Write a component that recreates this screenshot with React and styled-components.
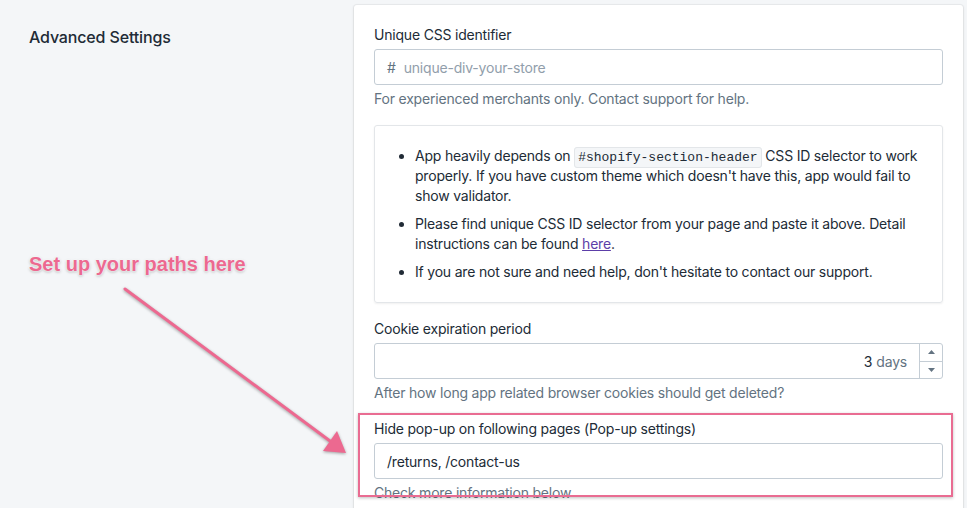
import React from "react";
import styled, { createGlobalStyle } from "styled-components";

const Global = createGlobalStyle`
  html, body {
    margin: 0;
    padding: 0;
    background: #f4f6f8;
  }
  body {
    font-family: Inter, "Noto Sans", sans-serif;
    color: #212b36;
    letter-spacing: -0.2px;
    -webkit-font-smoothing: antialiased;
  }
`;

const Page = styled.div`
  position: relative;
  width: 967px;
  height: 508px;
  overflow: hidden;
  display: grid;
  grid-template-columns: 354px 609px;
  align-items: start;
`;

const Aside = styled.div`
  padding: 27px 0 0 29px;
`;

const Heading = styled.h2`
  margin: 0;
  font-size: 16px;
  font-weight: 500;
  line-height: 20px;
  letter-spacing: -0.15px;
  color: #212b36;
`;

const Card = styled.div`
  margin-top: 5px;
  background: #fff;
  border-radius: 3px;
  box-shadow: 0 0 0 1px rgba(63, 63, 68, 0.05), 0 1px 3px 0 rgba(63, 63, 68, 0.15);
  padding: 20px 20px 40px;
  display: flex;
  flex-direction: column;
  gap: 16px;
`;

const Field = styled.div`
  position: relative;
  display: flex;
  flex-direction: column;
`;

const Label = styled.label`
  font-size: 14px;
  line-height: 20px;
  margin-bottom: 4px;
  color: #212b36;
`;

const InputBox = styled.div`
  height: 36px;
  box-sizing: border-box;
  border: 1px solid #c4cdd5;
  border-radius: 3px;
  display: flex;
  align-items: center;
  padding: 0 0 0 12px;
  font-size: 14px;
  color: #212b36;
  background: #fff;
`;

const Prefix = styled.span`
  color: #637381;
  margin-right: 8px;
`;

const Placeholder = styled.span`
  color: #919eab;
`;

const Help = styled.div`
  font-size: 14px;
  line-height: 20px;
  margin-top: 4px;
  color: #637381;
`;

const Value = styled.span`
  flex: 1;
  text-align: right;
  padding-right: 12px;
`;

const Unit = styled.span`
  color: #637381;
  margin-left: 4px;
`;

const Stepper = styled.div`
  width: 22px;
  height: 34px;
  border-left: 1px solid #c4cdd5;
  display: flex;
  flex-direction: column;
`;

const StepBtn = styled.div`
  flex: 1;
  display: flex;
  align-items: center;
  justify-content: center;
  & + & {
    border-top: 1px solid #c4cdd5;
  }
`;

const Notice = styled.div`
  border: 1px solid #e3e6e9;
  border-radius: 3px;
  box-shadow: 0 1px 2px rgba(63, 63, 68, 0.08);
  padding: 20px 14px 20px 20px;
`;

const List = styled.ul`
  margin: 0;
  padding-left: 20px;
  font-size: 14px;
  line-height: 20px;
  color: #212b36;
  li + li {
    margin-top: 8px;
  }
`;

const Code = styled.code`
  font-family: "Liberation Mono", "DejaVu Sans Mono", monospace;
  font-size: 13px;
  line-height: 14px;
  letter-spacing: 0;
  background: #f4f6f8;
  border: 1px solid #e3e6e9;
  border-radius: 3px;
  padding: 2px 3px;
`;

const Link = styled.a`
  color: #5c3ea8;
  text-decoration: underline;
`;

const Highlight = styled.div`
  position: absolute;
  top: -6px;
  left: -16px;
  right: -10px;
  height: 80px;
  border: 2px solid #e96c92;
  box-shadow: 0 1px 3px rgba(0, 0, 0, 0.25);
  pointer-events: none;
`;

const Callout = styled.div`
  position: absolute;
  left: 29px;
  top: 251px;
  font-family: "Liberation Sans", Arial, sans-serif;
  font-weight: 700;
  font-size: 20px;
  line-height: 26px;
  letter-spacing: 0;
  color: #ec6990;
  text-shadow: 0 0 2px #fff, 0 0 2px #fff, 0 1px 3px rgba(0, 0, 0, 0.35);
`;

const Arrow = styled.svg`
  position: absolute;
  left: 0;
  top: 0;
  pointer-events: none;
  filter: drop-shadow(0 1px 1.5px rgba(0, 0, 0, 0.35));
`;

function Caret({ up }) {
  return (
    <svg width="7" height="4" viewBox="0 0 7 4">
      <path d={up ? "M0 4 L3.5 0 L7 4 Z" : "M0 0 L3.5 4 L7 0 Z"} fill="#637381" />
    </svg>
  );
}

export default function App() {
  return (
    <>
      <Global />
      <Page>
        <Aside>
          <Heading>Advanced Settings</Heading>
        </Aside>
        <Card>
          <Field>
            <Label>Unique CSS identifier</Label>
            <InputBox>
              <Prefix>#</Prefix>
              <Placeholder>unique-div-your-store</Placeholder>
            </InputBox>
            <Help>For experienced merchants only. Contact support for help.</Help>
          </Field>

          <Notice>
            <List>
              <li>
                App heavily depends on <Code>#shopify-section-header</Code> CSS ID selector to work
                properly. If you have custom theme which doesn't have this, app would fail to show
                validator.
              </li>
              <li>
                Please find unique CSS ID selector from your page and paste it above. Detail
                instructions can be found <Link href="#">here</Link>.
              </li>
              <li>If you are not sure and need help, don't hesitate to contact our support.</li>
            </List>
          </Notice>

          <Field>
            <Label>Cookie expiration period</Label>
            <InputBox>
              <Value>
                3<Unit>days</Unit>
              </Value>
              <Stepper>
                <StepBtn>
                  <Caret up />
                </StepBtn>
                <StepBtn>
                  <Caret />
                </StepBtn>
              </Stepper>
            </InputBox>
            <Help>After how long app related browser cookies should get deleted?</Help>
          </Field>

          <Field>
            <Label>Hide pop-up on following pages (Pop-up settings)</Label>
            <InputBox>/returns, /contact-us</InputBox>
            <Help>Check more information below</Help>
            <Highlight />
          </Field>
        </Card>

        <Callout>Set up your paths here</Callout>
        <Arrow width="967" height="508" viewBox="0 0 967 508">
          <line x1="125" y1="289" x2="330" y2="441" stroke="#ec6990" strokeWidth="3" strokeLinecap="round" />
          <polygon points="346,453 323,451 337,431" fill="#ec6990" />
        </Arrow>
      </Page>
    </>
  );
}
